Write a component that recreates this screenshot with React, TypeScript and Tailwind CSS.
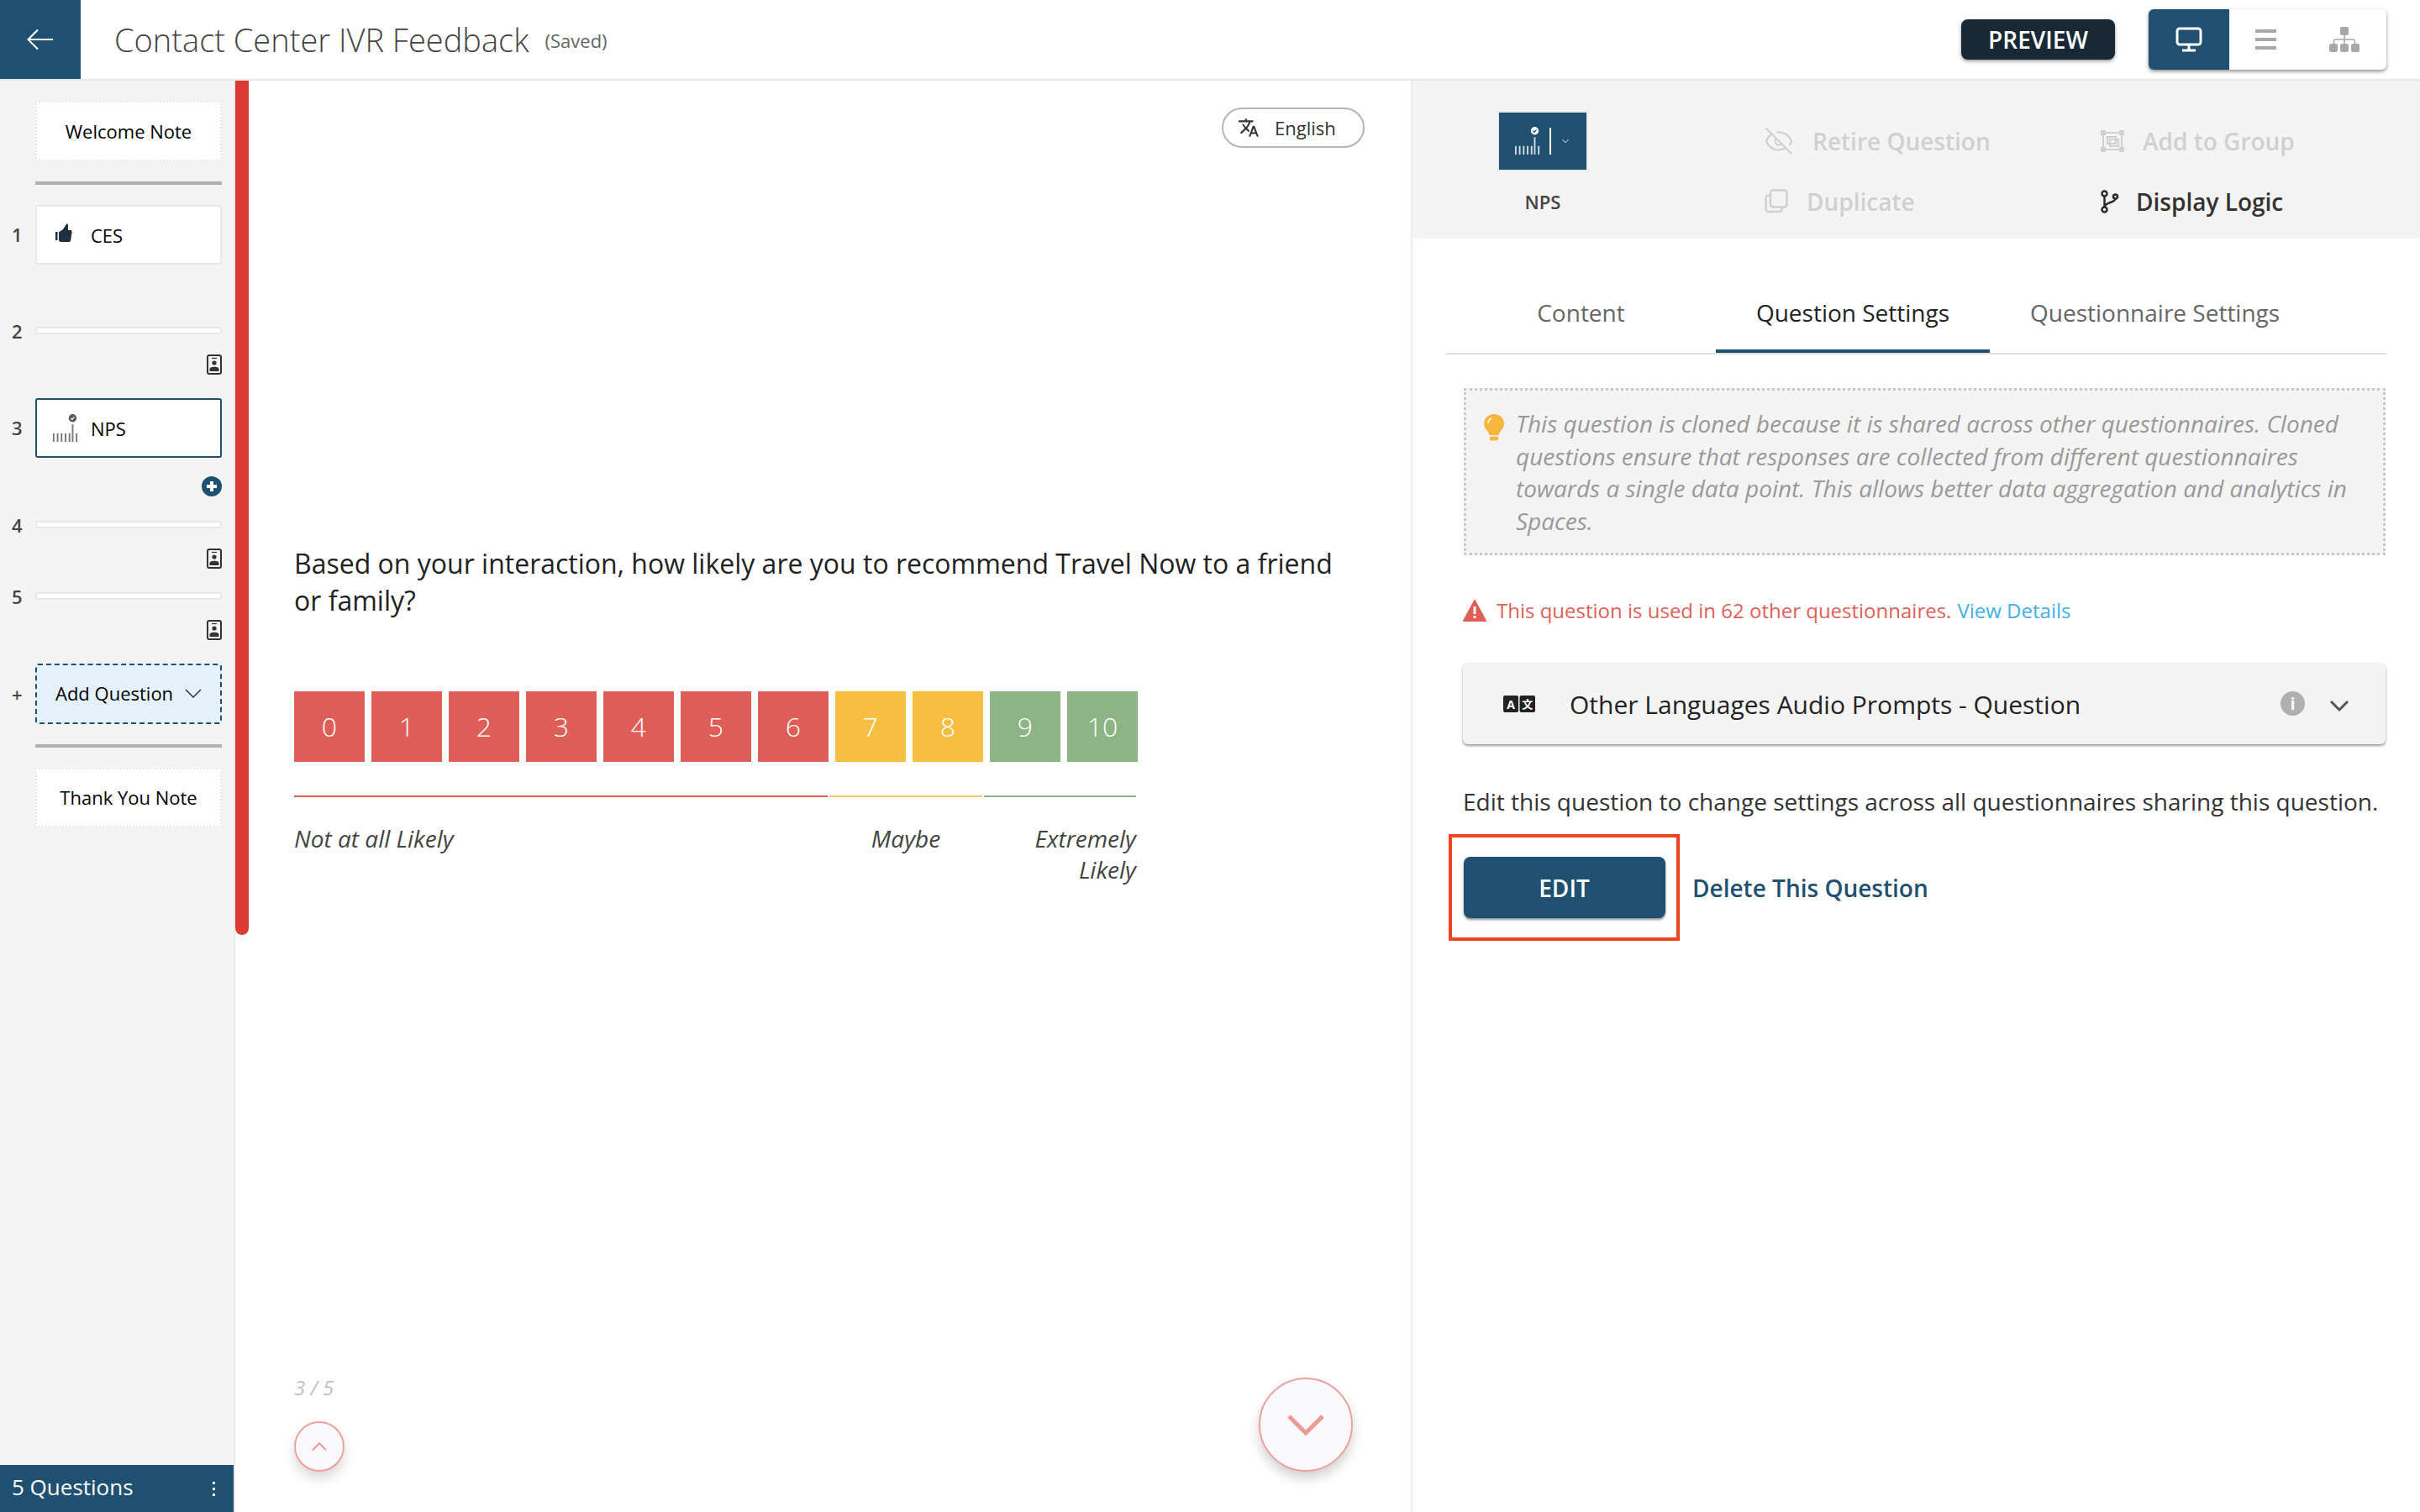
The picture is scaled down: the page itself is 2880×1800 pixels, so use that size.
import React from "react";
import { ChevronDown, ChevronUp, EyeOff } from "lucide-react";

const Nps = ({ c = "#555" }: { c?: string }) => (
  <svg width="32" height="36" viewBox="0 0 34 36" fill="none">
    <circle cx="26" cy="5" r="5" fill={c} />
    <path d="M23.8 5l1.6 1.6 2.8-3" stroke={c === "#fff" ? "#1f5070" : "#fff"} strokeWidth="1.3" />
    <path d="M2 24v11M7 24v11M12 24v11M17 24v11M22 24v11M26 13v22M31 24v11" stroke={c} strokeWidth="2" opacity="0.8" />
  </svg>
);

const Contact = () => (
  <svg width="18" height="24" viewBox="0 0 18 24" className="block">
    <rect x="1" y="1" width="16" height="22" rx="2" fill="#f4f4f4" stroke="#333" strokeWidth="2" />
    <path d="M6 4.500h6" stroke="#333" strokeWidth="1.200" />
    <circle cx="9" cy="10" r="2.600" fill="#333" />
    <path d="M3.500 20v-2.500c0-2 2.500-2.800 5.500-2.800s5.500.8 5.500 2.800V20z" fill="#333" />
  </svg>
);

const Slim = ({ n }: { n: string }) => (
  <div className="flex items-center h-[9px]">
    <span className="w-[42px] pl-[14px] text-[22px] leading-none font-semibold text-[#444]">{n}</span>
    <div className="w-[222px] h-[9px] rounded-[3px] bg-white border-2 border-[#e8e8e8]" />
  </div>
);

const cells = [0, 1, 2, 3, 4, 5, 6, 7, 8, 9, 10];
const cellBg = (n: number) => (n < 7 ? "bg-[#df5f58]" : n < 9 ? "bg-[#f6bf43]" : "bg-[#8cb484]");

export default function App() {
  return (
    <div className="w-[2880px] h-[1800px] flex flex-col bg-white overflow-hidden text-[#333] font-['Open_Sans',sans-serif]">
      <header className="h-[96px] shrink-0 flex items-start border-b-2 border-[#e8e8e8]">
        <div className="w-[96px] h-[94px] bg-[#1f5070] flex items-center justify-center">
          <svg width="32" height="26" viewBox="0 0 32 26" fill="none" stroke="#fff" strokeWidth="2">
            <path d="M31 13H2M13 1.500L1.500 13 13 24.500" />
          </svg>
        </div>
        <div className="flex items-baseline ml-[40px] mt-[22px]">
          <span className="text-[38px] leading-[50px] font-light text-[#444]">Contact Center IVR Feedback</span>
          <span className="text-[22px] ml-[19px] text-[#666] relative -top-[5px]">(Saved)</span>
        </div>
        <div className="ml-auto mr-[40px] flex items-start">
          <div className="mt-[23px] w-[183px] h-[48px] rounded-[8px] bg-[#182935] text-white text-[28px] font-semibold flex items-center justify-center shadow-[0_2px_4px_rgba(0,0,0,0.4)]">
            PREVIEW
          </div>
          <div className="ml-[40px] mt-[11px] w-[283px] h-[72px] rounded-[6px] flex bg-white overflow-hidden shadow-[0_2px_4px_rgba(0,0,0,0.45)]">
            <div className="w-[96px] bg-[#1f5070] flex items-center justify-center">
              <svg width="32" height="30" viewBox="0 0 32 30" fill="none">
                <rect x="2" y="2" width="28" height="19" rx="3" stroke="#fff" strokeWidth="3" />
                <path d="M16 21v6M8 28h16" stroke="#fff" strokeWidth="3" />
              </svg>
            </div>
            <div className="w-[87px] flex items-center justify-center">
              <div className="w-[25px] flex flex-col gap-[6px]">
                <div className="h-[4px] bg-[#a8a8a8]" />
                <div className="h-[4px] bg-[#a8a8a8]" />
                <div className="h-[4px] bg-[#a8a8a8]" />
              </div>
            </div>
            <div className="flex-1 flex items-center justify-center">
              <svg width="36" height="30" viewBox="0 0 36 30" fill="#a8a8a8">
                <rect x="13" y="0" width="10" height="10" rx="2" />
                <path d="M18 10v5M5.500 20v-3.500a1.500 1.500 0 0 1 1.500-1.500h22a1.500 1.500 0 0 1 1.500 1.500V20M18 15v5" stroke="#a8a8a8" strokeWidth="1.500" fill="none" />
                <rect x="0" y="20" width="10" height="10" rx="2.500" />
                <rect x="13" y="20" width="10" height="10" rx="2.500" />
                <rect x="26" y="20" width="10" height="10" rx="2.500" />
              </svg>
            </div>
          </div>
        </div>
      </header>

      <main className="flex-1 flex min-h-0">
        <aside className="w-[280px] shrink-0 flex flex-col justify-between bg-[#f4f4f4] border-r-2 border-[#e8e8e8]">
          <div className="pt-[24px] text-black">
            <div className="ml-[42px] w-[222px] h-[72px] bg-white border-2 border-dotted border-[#e8e8e8] flex items-center justify-center text-[22px]">Welcome Note</div>
            <div className="ml-[42px] w-[222px] h-[4px] mt-[24px] bg-[#b0b0b0]" />
            <div className="flex items-center mt-[24px]">
              <span className="w-[42px] pl-[14px] text-[22px] font-semibold text-[#444]">1</span>
              <div className="w-[222px] h-[71px] rounded-[3px] bg-white border-2 border-[#e8e8e8] flex items-center pl-[22px] text-[22px]">
                <svg width="20" height="24" viewBox="0 0 20 24" fill="#1e3040" className="mb-[5px]">
                  <rect x="0" y="11" width="2.500" height="10" />
                  <path d="M4 11.500l5-3.500 4.500-7 1.500 1.500V9h3c1.200 0 1.800 1.200 1.600 2.300l-1.400 9.400c-.3 1.500-1.200 2.300-2.700 2.300H7c-1.500 0-3-1-3-2z" />
                </svg>
                <span className="ml-[22px] relative top-[1px]">CES</span>
              </div>
            </div>
            <div className="mt-[74px]"><Slim n="2" /></div>
            <div className="flex justify-end pr-[14px] mt-[24px]"><Contact /></div>
            <div className="flex items-center mt-[28px]">
              <span className="w-[42px] pl-[14px] text-[22px] font-semibold text-[#444]">3</span>
              <div className="w-[222px] h-[71px] rounded-[3px] bg-white border-2 border-[#1f5070] flex items-center pl-[18px] text-[22px]">
                <Nps />
                <span className="ml-[14px] relative top-[1px]">NPS</span>
              </div>
            </div>
            <div className="flex justify-end pr-[14px] mt-[22px]">
              <svg width="24" height="24" viewBox="0 0 24 24">
                <circle cx="12" cy="12" r="12" fill="#1f5070" />
                <path d="M12 6v12M6 12h12" stroke="#fff" strokeWidth="4" />
              </svg>
            </div>
            <div className="mt-[29px]"><Slim n="4" /></div>
            <div className="flex justify-end pr-[14px] mt-[24px]"><Contact /></div>
            <div className="mt-[28px]"><Slim n="5" /></div>
            <div className="flex justify-end pr-[14px] mt-[24px]"><Contact /></div>
            <div className="flex items-center mt-[28px]">
              <span className="w-[42px] pl-[14px] text-[22px] font-semibold text-[#444]">+</span>
              <div className="w-[222px] h-[72px] rounded-[3px] bg-[#e4f1fb] border-2 border-dashed border-[#1f5070] flex items-center pl-[22px] text-[22px]">
                <span className="relative -top-[1px]">Add Question</span>
                <svg width="20" height="12" viewBox="0 0 20 12" fill="none" stroke="#333" strokeWidth="1.500" className="ml-[14px]">
                  <path d="M1 1l9 9 9-9" />
                </svg>
              </div>
            </div>
            <div className="ml-[42px] w-[222px] h-[4px] mt-[24px] bg-[#b0b0b0]" />
            <div className="ml-[42px] w-[222px] h-[71px] mt-[24px] bg-white border-2 border-dotted border-[#e8e8e8] flex items-center justify-center text-[22px]">Thank You Note</div>
          </div>
          <div className="h-[56px] bg-[#1f5070] text-white flex items-center justify-between pl-[14px] pr-[22px] text-[26px] leading-[50px] pb-[5px]">
            <span>5 Questions</span>
            <div className="flex flex-col gap-[4px] pt-[5px]">
              <div className="w-[3px] h-[3px] bg-white" />
              <div className="w-[3px] h-[3px] bg-white" />
              <div className="w-[3px] h-[3px] bg-white" />
            </div>
          </div>
        </aside>

        <div className="w-[16px] h-[1017px] shrink-0 bg-[#d93a35] rounded-b-[8px]" />

        <section className="w-[1385px] shrink-0 flex flex-col pl-[54px] pr-[55px] pb-[48px] border-r-2 border-[#eeeeee]">
          <div className="flex justify-end pt-[32px]">
            <div className="w-[170px] h-[48px] rounded-full border-2 border-[#b5b5b5] flex items-center pl-[17px] gap-[18px] text-[22px] text-[#333]">
              <svg width="26" height="26" viewBox="0 0 24 24" fill="#333">
                <path d="M12.870 15.070l-2.540-2.510.03-.03c1.740-1.940 2.980-4.170 3.710-6.530H17V4h-7V2H8v2H1v1.990h11.170C11.500 7.920 10.440 9.750 9 11.350 8.070 10.320 7.300 9.190 6.690 8h-2c.73 1.630 1.730 3.170 2.980 4.560l-5.090 5.020L4 19l5-5 3.110 3.110.76-2.040zM18.500 10h-2L12 22h2l1.120-3h4.750L21 22h2l-4.500-12zm-2.620 7l1.620-4.330L19.120 17h-3.240z" />
              </svg>
              <span>English</span>
            </div>
          </div>
          <p className="mt-[473px] text-[32px] leading-[44px] text-[#222] w-[1260px]">
            Based on your interaction, how likely are you to recommend Travel Now to a friend or family?
          </p>
          <div className="mt-[86px] flex gap-[8px]">
            {cells.map((n) => (
              <div key={n} className={`w-[84px] h-[84px] flex items-center justify-center text-white text-[32px] font-light ${cellBg(n)}`}>{n}</div>
            ))}
          </div>
          <div className="mt-[40px] w-[1002px] flex gap-[2px]">
            <div className="flex-[7] h-[2px] bg-[#df5f58]" />
            <div className="flex-[2] h-[2px] bg-[#f2c567]" />
            <div className="flex-[2] h-[2px] bg-[#8cb484]" />
          </div>
          <div className="mt-[31px] w-[1002px] flex text-[28px] leading-[37px] italic font-normal text-[#444]">
            <div className="w-[637px] shrink-0">Not at all Likely</div>
            <div className="w-[182px] shrink-0 text-center">Maybe</div>
            <div className="flex-1 min-w-0 text-right pl-[20px]">Extremely Likely</div>
          </div>
          <div className="mt-auto flex items-end justify-between">
            <div className="flex flex-col">
              <span className="text-[24px] leading-[30px] italic font-normal text-[#c0c0c0]">3 / 5</span>
              <div className="mt-[25px] w-[60px] h-[60px] rounded-full bg-[#fafafc] border-2 border-[#f0a09c] flex items-center justify-center shadow-[0_8px_14px_rgba(0,0,0,0.15)]">
                <ChevronUp size={30} strokeWidth={1.6} className="text-[#ee9b97]" />
              </div>
            </div>
            <div className="w-[112px] h-[112px] mr-[14px] rounded-full bg-[#fafafc] border-2 border-[#f0a09c] flex items-center justify-center shadow-[0_8px_14px_rgba(0,0,0,0.18)]">
              <svg width="44" height="26" viewBox="0 0 44 26" fill="none" stroke="#ee9b97" strokeWidth="5">
                <path d="M2 3l20 20L42 3" />
              </svg>
            </div>
          </div>
        </section>

        <section className="flex-1 min-w-0">
          <div className="h-[188px] bg-[#f4f4f4] relative flex text-[28px] font-semibold">
            <div className="w-[310px] pt-[36px] flex flex-col items-center shrink-0">
              <div className="w-[108px] h-[72px] bg-[#1f5070] border-2 border-[#e8e8e8] flex items-center pl-[18px]">
                <Nps c="#fff" />
                <div className="ml-[10px] w-[2px] h-[32px] bg-white" />
                <ChevronDown size={14} strokeWidth={1.5} className="ml-[10px] text-white" />
              </div>
              <span className="mt-[21px] text-[22px] leading-[30px] text-[#444]">NPS</span>
            </div>
            <div className="pt-[52px] pl-[109px] grid grid-cols-[400px_auto] grid-rows-[39px_39px] gap-y-[33px] h-fit">
              <div className="flex items-center text-[#d0d0d0] gap-[22px]">
                <EyeOff size={36} strokeWidth={1.4} className="-ml-[1px]" />
                <span>Retire Question</span>
              </div>
              <div className="flex items-center text-[#d0d0d0] gap-[22px]">
                <svg width="28" height="26" viewBox="0 0 28 26" fill="none" stroke="#d0d0d0" strokeWidth="2">
                  <rect x="3" y="3" width="22" height="20" />
                  <rect x="8" y="8" width="10" height="8" />
                  <rect x="11" y="11" width="10" height="8" />
                  <path d="M1 1h4v4H1zM23 1h4v4h-4zM1 21h4v4H1zM23 21h4v4h-4z" />
                </svg>
                <span>Add to Group</span>
              </div>
              <div className="flex items-center text-[#d0d0d0] gap-[22px]">
                <svg width="28" height="29" viewBox="0 0 28 29" fill="none" stroke="#d0d0d0" strokeWidth="2.500">
                  <rect x="7" y="1.500" width="19.500" height="20" rx="3" />
                  <path d="M7 7.500H4.500a3 3 0 0 0-3 3V24a3 3 0 0 0 3 3h13a3 3 0 0 0 3-3v-2.500" />
                </svg>
                <span>Duplicate</span>
              </div>
              <div className="flex items-center text-[#333] gap-[20px]">
                <svg width="22" height="28" viewBox="0 0 22 28" fill="none" stroke="#2b2b2b" strokeWidth="2.500">
                  <circle cx="4.500" cy="4.500" r="3" />
                  <circle cx="4.500" cy="23.500" r="3" />
                  <circle cx="17.500" cy="8" r="2.500" />
                  <path d="M4.500 7.500v13M17.500 10.500c0 5-13 4-13 10" />
                </svg>
                <span>Display Logic</span>
              </div>
            </div>
          </div>

          <div className="mx-[40px] mt-[60px] flex border-b-2 border-[#e0e0e0] text-[28px] text-[#666] h-[78px]">
            <div className="w-[321px] flex justify-center pt-[7px]">Content</div>
            <div className="w-[326px] flex justify-center pt-[7px] text-[#222] border-b-4 border-[#1f5070] h-[76px]">Question Settings</div>
            <div className="ml-[48px] pt-[7px]">Questionnaire Settings</div>
          </div>

          <div className="px-[60px]">
            <div className="mt-[40px] ml-[1px] w-[1097px] h-[199px] bg-[#f4f4f4] border-[3px] border-dotted border-[#c8c8c8] flex pl-[20px] pt-[20px]">
              <svg width="26" height="34" viewBox="0 0 26 34" className="mt-[7px] shrink-0">
                <path d="M13 1C6 1 1 6 1 12.500c0 6 5 8 6.500 13.500h11C20 20.500 25 18.500 25 12.500 25 6 20 1 13 1z" fill="#f6b63f" />
                <rect x="8" y="27.500" width="10" height="5" rx="1.500" fill="#f6b63f" />
                <path d="M6 12c0-3 2-5 4-6" stroke="#fff" strokeWidth="1.500" fill="none" />
              </svg>
              <p className="ml-[13px] pr-[20px] text-[28px] leading-[38.5px] italic text-[#999]">
                This question is cloned because it is shared across other questionnaires. Cloned questions ensure that responses are collected from different questionnaires towards a single data point. This allows better data aggregation and analytics in Spaces.
              </p>
            </div>
            <div className="mt-[49px] flex items-center text-[24px] leading-[34px]">
              <svg width="28" height="26" viewBox="0 0 28 26">
                <path d="M14 1L27 25H1z" fill="#df5f58" stroke="#df5f58" strokeWidth="2" strokeLinejoin="round" />
                <path d="M14 8v9M14 19v3" stroke="#fff" strokeWidth="3" />
              </svg>
              <span className="ml-[12px] text-[#e05f59]">This question is used in 62 other questionnaires.</span>
              <span className="ml-[7px] text-[#45aee8]">View Details</span>
            </div>
            <div className="mt-[45px] w-[1098px] h-[97px] rounded-[6px] bg-[#f4f4f4] shadow-[0_2px_3px_rgba(0,0,0,0.4)] flex items-center pl-[48px] pr-[43px]">
              <svg width="38" height="20" viewBox="0 0 38 20">
                <rect x="0" y="0" width="18" height="20" rx="2" fill="#222" />
                <rect x="19.500" y="0" width="18.500" height="20" rx="2" fill="#222" />
                <text x="9" y="15.500" textAnchor="middle" fontSize="14" fontWeight="700" fill="#fff" fontFamily="Open Sans">A</text>
                <text x="28.800" y="15" textAnchor="middle" fontSize="13" fontWeight="700" fill="#fff" fontFamily="Noto Sans CJK SC">文</text>
              </svg>
              <span className="ml-[41px] text-[30px] leading-[40px] text-[#222] relative top-[1px]">Other Languages Audio Prompts - Question</span>
              <div className="ml-auto w-[29px] h-[29px] rounded-full bg-[#b0b0b0] text-white text-[20px] font-bold flex items-center justify-center">i</div>
              <svg width="24" height="14" viewBox="0 0 24 14" fill="none" stroke="#555" strokeWidth="3" className="ml-[29px] relative top-[2px]">
                <path d="M2 2l10 10L22 2" />
              </svg>
            </div>
            <p className="mt-[49px] text-[28px] leading-[38px] text-[#333] whitespace-nowrap">Edit this question to change settings across all questionnaires sharing this question.</p>
            <div className="mt-[20px] flex items-center">
              <div className="-ml-[17px] w-[275px] h-[127px] border-4 border-[#ee4423] flex items-center justify-center">
                <div className="w-[240px] h-[73px] rounded-[8px] bg-[#1f5070] text-white text-[28px] font-semibold flex items-center justify-center shadow-[0_2px_3px_rgba(0,0,0,0.45)]">EDIT</div>
              </div>
              <span className="ml-[15px] text-[#1f5070] text-[28px] font-semibold">Delete This Question</span>
            </div>
          </div>
        </section>
      </main>
    </div>
  );
}
